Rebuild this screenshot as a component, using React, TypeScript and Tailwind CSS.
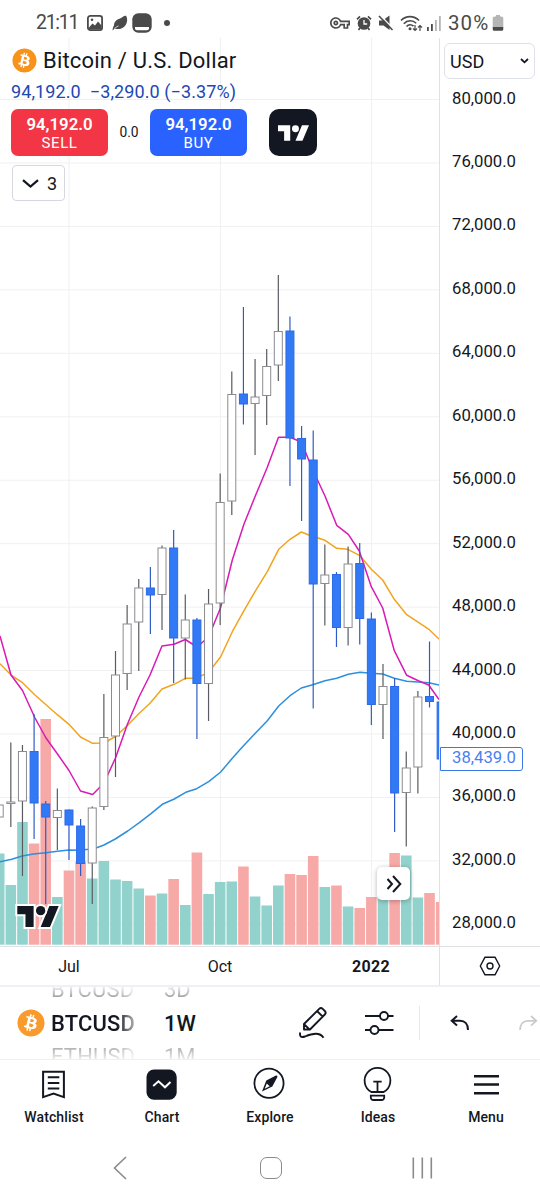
import type { ReactNode } from 'react'
import { FaBitcoin } from 'react-icons/fa'
import { MdOutlineVpnKey } from 'react-icons/md'

// high, body top, body bottom, low, direction, volume top
type Candle = [number, number, number, number, 'up' | 'down', number]

const STEP = 11.63
const candleX = (i: number) => -0.8 + i * STEP

const CANDLES: Candle[] = [
  [804.5, 804.5, 817.5, 817.5, 'up', 853.5],
  [742.5, 801.5, 804, 827, 'up', 885],
  [745, 751, 801.5, 876, 'up', 822],
  [714, 751, 803.5, 839, 'down', 843.5],
  [801, 803.5, 817.5, 904, 'down', 719],
  [788.5, 810, 818, 850, 'up', 897],
  [809.5, 809.5, 825.5, 860, 'down', 870.5],
  [819, 825.5, 864, 876, 'down', 861.5],
  [806.5, 807.5, 863.5, 904, 'up', 878.5],
  [694, 737, 807, 810, 'up', 861],
  [651, 674.5, 736.5, 777, 'up', 879.5],
  [605, 623.5, 674, 690, 'up', 881],
  [579, 587.5, 622.5, 671, 'up', 888.5],
  [567, 587.5, 595.5, 634, 'down', 895.5],
  [545.5, 547.5, 595, 630, 'up', 893.5],
  [530, 547.5, 638.5, 683, 'down', 879],
  [594.5, 619.5, 638.5, 679.5, 'up', 905],
  [618, 619.5, 684, 739, 'down', 852.5],
  [589, 603.5, 684, 721, 'up', 894],
  [473.5, 502, 603.5, 625, 'up', 882],
  [371.5, 394, 501.5, 515, 'up', 881.5],
  [307, 393.5, 404.5, 424.5, 'down', 866.5],
  [359, 396.5, 404, 455, 'up', 896.5],
  [349, 366, 396, 425, 'up', 905.5],
  [275, 331, 365.5, 381, 'up', 885.5],
  [316.5, 330.5, 438.5, 486, 'down', 874],
  [426, 438, 459.5, 521, 'down', 875],
  [430.5, 459.5, 584.5, 708.5, 'down', 856],
  [544.5, 574.5, 584, 625.5, 'up', 887],
  [572, 574, 628, 647, 'down', 885.5],
  [546.5, 563.5, 628, 645.5, 'up', 906.5],
  [543, 563, 619, 644.5, 'down', 908],
  [612.5, 618.5, 705, 725, 'down', 897],
  [664, 686, 705, 739, 'up', 897],
  [678, 686, 793.5, 832, 'down', 853],
  [751.5, 767.5, 793, 846.5, 'up', 855.5],
  [691, 696.5, 767.5, 793.5, 'up', 897.5],
  [641.5, 696, 702, 707.5, 'down', 893],
  [701.5, 701.5, 759.5, 759.5, 'down', 902],
]

const FAST_MA =
  '0,636 11,675 22.5,690.5 35,718 46,738 57.5,754 69,770.5 80.5,791 92.7,794.5 104,783 115.5,758 127.5,724 139,697 150,675 162,646 174,644.3 185.3,639.5 197,647 208.5,637 220.5,608 232.3,560 244,524 255.3,496 267,468 278.5,437.3 290,437.3 301.3,442 313.3,471 325,496 336.7,525.3 348.3,534.3 359.3,551 371.3,586.7 382.7,608 394.3,650.7 406.7,675.3 418.3,680.7 428.7,685 439,699.5'
const MID_MA =
  '0,663.7 11.5,675.5 22.5,682.7 35,695 46,704.7 57.3,714.7 69,724.3 80.5,737 92.7,743.3 104,743 115.5,736.5 127.7,725.3 139,713.5 150,703.3 162,689 174,684.3 185.3,678.3 194,678.3 203,675 208.5,672.5 220.7,656.7 232.3,631.7 244,610.7 255,591.7 267.3,571.7 278.7,549.3 290,539.3 301.3,532 309,535 318,538 325,540.3 336.7,548.3 347.7,549.3 360,555.7 371.3,569.3 382.7,580 394.3,599.3 406.7,614.7 417.3,621.7 429.3,629.7 439.3,639.3'
const SLOW_MA =
  '0,861.7 11.7,859.3 22.3,856 33.3,854 46,852.7 57.3,851.3 69,850 80.3,850.3 88.3,849.3 96.7,847.7 104,845 115.3,839 127.7,831 139.3,822.7 151,813.7 162.3,804.3 174.3,799 185.7,792.3 196.7,788.7 208.7,781.7 220.7,772 232.3,758.3 243.5,745.7 255.3,733.3 267.3,720.7 278.7,706 290,695.7 301.3,688 312.7,684.7 325,680.7 336.7,678.3 348.3,674.3 360,672.3 371.3,673.3 382.7,674 394.3,678.3 406.7,681.3 428.7,682.7 439.3,685'

const PRICES = [80, 76, 72, 68, 64, 60, 56, 52, 48, 44, 40, 36, 32, 28]

function StatusBar() {
  return (
    <div className="flex h-[38px] shrink-0 items-center pt-[8px] pl-[36px] text-[#4a4a4a]">
      <span className="w-[51px] text-[19.5px] leading-none tracking-[-1.3px]">21:11</span>
      <svg className="h-4 w-4" viewBox="0 0 16 16">
        <rect x="0.9" y="0.9" width="14.2" height="14.2" rx="2.4" fill="none" stroke="currentColor" strokeWidth="1.8" />
        <circle cx="5" cy="4.8" r="1.3" fill="currentColor" />
        <path d="M2 12.5 5.5 8.5 8 10.5 11 6.5 14.5 10.5V14.5H2Z" fill="currentColor" />
      </svg>
      <svg className="ml-[9px] h-4 w-4" viewBox="0 0 16 16">
        <path d="M0.5 15.5C0.8 13 1 12 2 10.5 2 7 4.500 4.500 8 3.500 10.500 2.500 12 0.300 14 0.800 15.800 3.500 15.500 8 13 11 10.500 14 6 14.800 2.800 13.500Z" fill="currentColor" />
        <path d="M2.500 13.300 6.500 10.800" stroke="#fff" strokeWidth="0.700" />
      </svg>
      <svg className="ml-[4px] h-5 w-5" viewBox="0 0 20 20">
        <rect x="0.3" y="0.3" width="19.4" height="19.4" rx="6" fill="currentColor" />
        <path d="M3 14h14v1.200a2 2 0 0 1-2 2H5a2 2 0 0 1-2-2Z" fill="#fff" />
      </svg>
      <span className="ml-[12px] h-[6px] w-[6px] rounded-full bg-[#4a4a4a]" />
      <MdOutlineVpnKey className="ml-[160px] h-[20px] w-[20px]" />
      <svg className="ml-[6px] h-4 w-4" viewBox="0 0 16 16">
        <circle cx="8" cy="8.500" r="6.300" fill="currentColor" />
        <path d="M1 4.300 4 1.300M15 4.300 12 1.300M4 13 2.500 15M12 13l1.500 2" stroke="currentColor" strokeWidth="1.700" />
        <path d="M8 5v4h3.200" fill="none" stroke="#fff" strokeWidth="1.300" />
      </svg>
      <svg className="ml-[6px] h-4 w-4" viewBox="0 0 16 16">
        <path d="M1 5.500H4.500L11.500 0.500V15L5.500 10.500H1Z" fill="currentColor" />
        <path d="M2.500 0.500 15.500 14" stroke="#fff" strokeWidth="1.400" />
        <path d="M1 1 14.500 15" stroke="currentColor" strokeWidth="1.600" />
      </svg>
      <svg className="ml-[6px] h-[17px] w-[23px]" viewBox="0 0 23 17" fill="none" stroke="currentColor">
        <path d="M1 5.500C6 0.300 14 0.300 19 5.500M3.800 8.700c3.500-3.800 9-3.800 12.400-.5M6.500 11.500c2-2.200 5-2.200 7-.3" strokeWidth="1.600" />
        <circle cx="10" cy="13.800" r="1.500" fill="currentColor" stroke="none" />
        <path d="M15 10v5.500M13 13.500l2 2 2-2M20 16v-5.500M18 12.500l2-2 2 2" strokeWidth="1.200" />
      </svg>
      <svg className="ml-[4px] h-[15px] w-[14px]" viewBox="0 0 14 15">
        <rect x="0" y="11" width="1.800" height="4" fill="#4a4a4a" />
        <rect x="4" y="8" width="1.800" height="7" fill="#4a4a4a" />
        <rect x="8" y="4" width="1.800" height="11" fill="#b5b5b5" />
        <rect x="12" y="0" width="1.800" height="15" fill="#b5b5b5" />
      </svg>
      <span className="ml-[7px] w-[44px] text-[20.5px] leading-none tracking-[1.1px]">30%</span>
      <svg className="h-4 w-3" viewBox="0 0 12 16">
        <path d="M4 0h4v1.500h1.500A1.800 1.800 0 0 1 11.300 3.300V12H.7V3.300A1.800 1.800 0 0 1 2.500 1.500H4Z" fill="#b5b5b5" />
        <path d="M.7 12h10.600v2.200a1.500 1.500 0 0 1-1.500 1.500H2.200a1.500 1.500 0 0 1-1.500-1.500Z" fill="#4a4a4a" />
      </svg>
    </div>
  )
}

function TradingViewMark({ className, outlined }: { className: string; outlined?: boolean }) {
  return (
    <svg
      className={className}
      viewBox="0 4 35.500 18"
      overflow="visible"
      fill="currentColor"
      stroke={outlined ? '#fff' : 'none'}
      strokeWidth={outlined ? 3.4 : 0}
      paintOrder="stroke"
    >
      <path d="M14 22H7V11H0V4h14v18zM28 22h-8l7.500-18h8L28 22z" />
      <circle cx="20" cy="8" r="4" />
    </svg>
  )
}

function PriceChart() {
  return (
    <svg className="block h-[908px] w-[439px]" viewBox="0 38 439 908">
      {PRICES.map((p, i) => (
        <line key={p} x1="0" x2="439" y1={99.5 + i * 63.45} y2={99.5 + i * 63.45} stroke="#f0f0f1" />
      ))}
      {[69, 220.5, 371.5].map((x) => (
        <line key={x} x1={x} x2={x} y1="38" y2="946" stroke="#f0f0f1" />
      ))}
      {CANDLES.map(([, , , , dir, vol], i) => (
        <rect
          key={i}
          x={candleX(i) - 5.3}
          y={vol}
          width="10.6"
          height={944.7 - vol}
          fill={dir === 'up' ? '#92d2cc' : '#f7a9a7'}
        />
      ))}
      <g fill="none" strokeWidth="1.5" strokeLinejoin="round">
        <polyline points={SLOW_MA} stroke="#2e8fdc" />
        <polyline points={MID_MA} stroke="#f2a41f" />
        <polyline points={FAST_MA} stroke="#d81bb5" />
      </g>
      {CANDLES.map(([high, top, bottom, low, dir], i) => {
        const x = candleX(i)
        const up = dir === 'up'
        return (
          <g key={i}>
            <line x1={x} x2={x} y1={high} y2={low} stroke={up ? '#5a5b60' : '#2f5cc4'} strokeWidth="1.2" />
            <rect
              x={x - 4}
              y={top + 0.5}
              width="8"
              height={Math.max(bottom - top - 1, 1)}
              fill={up ? '#fff' : '#3179f5'}
              stroke={up ? '#8c8c90' : '#2d6ae8'}
              strokeWidth="1"
            />
          </g>
        )
      })}
    </svg>
  )
}

function TradeButton({ label, className }: { label: string; className: string }) {
  return (
    <div className={`flex h-[47px] w-[97px] flex-col items-center justify-center rounded-[7px] pt-[2px] text-white ${className}`}>
      <span className="text-[16.8px] leading-[19px] font-semibold">94,192.0</span>
      <span className="text-[15px] leading-[19px] tracking-[0.6px]">{label}</span>
    </div>
  )
}

function Legend() {
  return (
    <div className="absolute top-0 left-0 flex flex-col pl-[11px]">
      <div className="flex h-[45px] items-center">
        <FaBitcoin className="ml-[1px] h-[25px] w-[25px] rounded-full bg-white text-[#f7931a]" />
        <span className="ml-[6px] text-[22px] tracking-[0.2px] whitespace-nowrap">Bitcoin / U.S. Dollar</span>
      </div>
      <div className="flex h-[16px] items-center gap-[9px] text-[18px] tracking-[0.1px] whitespace-nowrap text-[#2247b5]">
        <span>94,192.0</span>
        <span>−3,290.0 (−3.37%)</span>
      </div>
      <div className="mt-[10px] flex items-center">
        <TradeButton label="SELL" className="bg-[#f23645]" />
        <span className="w-[42px] text-center text-[13.800px]">0.0</span>
        <TradeButton label="BUY" className="bg-[#2962ff]" />
        <div className="ml-[22px] flex h-[47px] w-[48px] items-center justify-center rounded-[10px] bg-[#131722] text-white">
          <TradingViewMark className="h-[16px] w-[31px]" />
        </div>
      </div>
      <div className="mt-[9px] ml-[1px] flex h-[36px] w-[53px] items-center rounded-[4px] border border-[#d5d8e0] bg-white pl-[9px]">
        <svg className="h-[9px] w-[17px]" viewBox="0 0 17 9" fill="none" stroke="#131722" strokeWidth="2.2">
          <path d="M1 1.200 8.500 7.500 16 1.200" />
        </svg>
        <span className="ml-[8px] text-[18px]">3</span>
      </div>
    </div>
  )
}

function PriceAxis() {
  return (
    <div className="relative flex h-[908px] w-[101px] flex-col border-l border-[#e0e1e5] bg-white">
      <div className="mt-[5px] ml-[4px] flex h-[36px] w-[91px] items-center justify-between rounded-[6px] border border-[#dfe1ea] pr-[5px] pl-[5px] text-[18px]">
        <span className="pt-[1px] tracking-[0.1px]">USD</span>
        <svg className="h-[6px] w-[9px]" viewBox="0 0 9 6" fill="none" stroke="#131722" strokeWidth="1.8">
          <path d="M1 1 4.500 4.300 8 1" />
        </svg>
      </div>
      <div className="mt-[9.5px] mb-[12.5px] flex flex-1 flex-col justify-between pl-[12px] text-[16.700px] leading-5">
        {PRICES.map((p) => (
          <span key={p}>{p},000.0</span>
        ))}
      </div>
      <div className="absolute top-[709px] left-0 flex h-[24px] w-[83px] items-center rounded-r-[3px] border border-[#3b77e6] bg-white pb-[2px] pl-[11px] text-[16.700px] text-[#4a7ff0]">
        38,439.0
      </div>
    </div>
  )
}

function TimeAxis() {
  return (
    <div className="flex h-[39px] shrink-0 border-t border-[#e0e1e5] text-[16px]">
      <div className="flex w-[439px] items-center gap-[51px] pt-[1px] pl-[19px]">
        <span className="w-[100px] text-center">Jul</span>
        <span className="w-[100px] text-center">Oct</span>
        <span className="w-[100px] text-center font-bold tracking-[0.3px]">2022</span>
      </div>
      <div className="flex flex-1 items-center justify-center border-l border-[#e0e1e5]">
        <svg className="h-[20px] w-[22px]" viewBox="0 0 22 20" fill="none" stroke="#131722" strokeWidth="1.400">
          <path d="M6 1.200h10L20.700 10 16 18.800H6L1.300 10Z" strokeLinejoin="round" />
          <circle cx="11" cy="10" r="3" />
        </svg>
      </div>
    </div>
  )
}

function Wheel({ items, className }: { items: string[]; className: string }) {
  return (
    <div className={`flex h-[72px] flex-col items-start justify-center overflow-hidden text-[22px] leading-[33px] ${className}`}>
      <span className="shrink-0 bg-linear-to-b from-white from-35% to-[#87878b] to-85% bg-clip-text text-transparent">{items[0]}</span>
      <span className="shrink-0 pt-px font-medium">{items[1]}</span>
      <span className="shrink-0 bg-linear-to-t from-white from-30% to-[#8d8d90] bg-clip-text text-transparent">{items[2]}</span>
    </div>
  )
}

function Toolbar() {
  return (
    <div className="flex h-[75px] shrink-0 items-center overflow-hidden border-t-2 border-b border-[#eef0f5] pl-[17px]">
      <FaBitcoin className="h-[28px] w-[28px] shrink-0 rounded-full bg-white text-[#f99a2c]" />
      <Wheel
        items={['BTCUSD', 'BTCUSD', 'ETHUSD']}
        className="ml-[5px] w-[89px] pl-px tracking-[0.15px] mask-r-from-75% mask-r-to-105%"
      />
      <Wheel items={['3D', '1W', '1M']} className="ml-[25px] w-[50px]" />
      <svg className="ml-[85px] h-[32px] w-[28px] shrink-0" viewBox="0 0 28 32" fill="none" stroke="#131722" strokeWidth="1.900">
        <path d="M5 17 20.200 1.900a2.500 2.500 0 0 1 3.500 0l2.100 2.100a2.500 2.500 0 0 1 0 3.500L11 22.500H5ZM18 4l5.700 5.700M5.300 17.300l5.200 5.200" strokeLinejoin="round" />
        <path d="M1.200 25.500C0.500 29 1.500 31 6 29.500c7-3 15-4.500 18.500 1.300" />
      </svg>
      <svg className="ml-[38px] h-[26px] w-[29px] shrink-0" viewBox="0 0 29 26" fill="none" stroke="#131722" strokeWidth="1.900">
        <path d="M0 6h15M23 6h5.500M0 20h5.500M13.500 20h15" />
        <circle cx="19" cy="6" r="4" />
        <circle cx="9.500" cy="20" r="4" />
      </svg>
      <span className="ml-[25px] h-[34px] w-px shrink-0 bg-[#e6e8ee]" />
      <svg className="ml-[30px] h-[16px] w-[20px] shrink-0" viewBox="0 0 20 16" fill="none" stroke="#131722" strokeWidth="2">
        <path d="M7 1 1.700 5.800 7 10.600M2 5.800h8c5 0 8 3.500 8 9.200" />
      </svg>
      <svg className="ml-[48px] h-[16px] w-[20px] shrink-0" viewBox="0 0 20 16" fill="none" stroke="#c9cacd" strokeWidth="1.700">
        <path d="M13 1l5.300 4.800L13 10.600M18 5.800h-8c-5 0-8 3.500-8 9.200" />
      </svg>
    </div>
  )
}

function NavItem({ label, children }: { label: string; children: ReactNode }) {
  return (
    <div className="flex w-[108px] flex-col items-center pt-[9px]">
      <svg className="h-[32px] w-[32px] overflow-visible" viewBox="0 0 32 32" fill="none" stroke="#131722" strokeWidth="2">
        {children}
      </svg>
      <span className="mt-[6px] text-[14px] leading-5 font-medium tracking-[0.1px]">{label}</span>
    </div>
  )
}

function BottomNav() {
  return (
    <div className="flex h-[76px] shrink-0">
      <NavItem label="Watchlist">
        <path d="M5.100 2.700h20.800v25.400L15.500 24.500 5.100 28.100ZM9.800 8.200h11.500M9.800 13.900h11.500M9.800 19.600h11.500" />
      </NavItem>
      <NavItem label="Chart">
        <rect x="0.500" y="0.500" width="30.200" height="30.200" rx="7.500" fill="#131722" stroke="none" />
        <path d="M7.200 17 12.500 12.300 19 18.300 24.500 13" stroke="#fff" />
      </NavItem>
      <NavItem label="Explore">
        <circle cx="15" cy="14.300" r="14.600" strokeWidth="1.800" />
        <path d="M21.500 6.800C23.200 6.200 23.800 7 23.100 8.500L18.300 17.500 8 22.500 12.300 11.500Z" fill="#131722" stroke="none" />
        <path d="M12.800 14.500 10.700 19.800 15.700 17.300Z" fill="#fff" stroke="none" />
      </NavItem>
      <NavItem label="Ideas">
        <path d="M9.300 23A12.900 12.900 0 1 1 21.700 23ZM15.500 23V12.700M11.300 12.700h8.400" strokeWidth="1.800" />
        <path d="M8.800 26.700h13.400v1.800a2.500 2.500 0 0 1-2.500 2.500h-8.400a2.500 2.500 0 0 1-2.500-2.500Z" strokeWidth="1.800" />
      </NavItem>
      <NavItem label="Menu">
        <path d="M4 7.200h25M4 15.500h25M4 24.200h25" strokeWidth="2.400" />
      </NavItem>
    </div>
  )
}

function SystemNav() {
  return (
    <div className="flex flex-1 items-center pl-[113px]">
      <svg className="h-[24px] w-[14px]" viewBox="0 0 14 24" fill="none" stroke="#8a8a8a" strokeWidth="1.600">
        <path d="M13 1 1.500 12 13 23" />
      </svg>
      <span className="ml-[133px] h-[22px] w-[22px] rounded-[7px] border-[1.500px] border-[#8a8a8a]" />
      <svg className="ml-[130px] h-[22px] w-[21px]" viewBox="0 0 21 22" stroke="#8a8a8a" strokeWidth="1.600">
        <path d="M1.300 0.500v21M10.300 0.500v21M19.300 0.500v21" />
      </svg>
    </div>
  )
}

export default function App() {
  return (
    <div className="flex h-[1200px] w-[540px] flex-col overflow-hidden bg-white font-[Roboto,sans-serif] text-[#131722]">
      <StatusBar />
      <div className="relative flex h-[908px] shrink-0">
        <PriceChart />
        <PriceAxis />
        <Legend />
        {/* Watermark and jump-to-latest button float over the plot */}
        <TradingViewMark className="absolute top-[868px] left-[17px] h-[21px] w-[42px]" outlined />
        <div className="absolute top-[829px] left-[377px] flex h-[33px] w-[33px] items-center justify-center rounded-[5px] bg-white shadow-[0_1px_5px_rgba(0,0,0,0.3)]">
          <svg className="h-[18px] w-[16px]" viewBox="0 0 16 18" fill="none" stroke="#131722" strokeWidth="2">
            <path d="M1.500 4 6 9l-4.500 5M7 1l7.300 8L7 17" />
          </svg>
        </div>
      </div>
      <TimeAxis />
      <Toolbar />
      <BottomNav />
      <SystemNav />
    </div>
  )
}
